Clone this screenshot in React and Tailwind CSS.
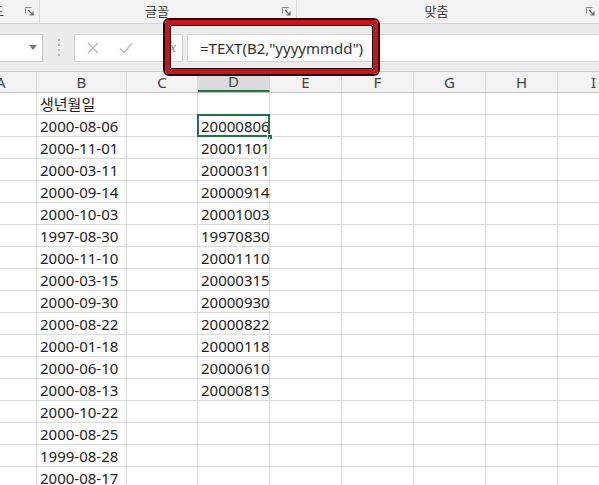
import React from 'react'

const dates = [
  '2000-08-06', '2000-11-01', '2000-03-11', '2000-09-14', '2000-10-03', '1997-08-30',
  '2000-11-10', '2000-03-15', '2000-09-30', '2000-08-22', '2000-01-18', '2000-06-10',
  '2000-08-13', '2000-10-22', '2000-08-25', '1999-08-28', '2000-08-17',
]
const results = [
  '20000806', '20001101', '20000311', '20000914', '20001003', '19970830',
  '20001110', '20000315', '20000930', '20000822', '20000118', '20000610', '20000813',
]

const cols = [
  { id: 'A', w: 'w-[37px]' },
  { id: 'B', w: 'w-[90px]' },
  { id: 'C', w: 'w-[71px]' },
  { id: 'D', w: 'w-[72px]' },
  { id: 'E', w: 'w-[72px]' },
  { id: 'F', w: 'w-[72px]' },
  { id: 'G', w: 'w-[72px]' },
  { id: 'H', w: 'w-[72px]' },
  { id: 'I', w: 'w-[72px]' },
]

function Launcher() {
  return (
    <svg width="9" height="9" viewBox="0 0 9 9" className="shrink-0">
      <path d="M0.5 0.5h6M0.5 0.5v6" stroke="#888" strokeWidth="1" fill="none" />
      <path d="M3 3l5 5M8 4.5v3.5h-3.5" stroke="#666" strokeWidth="1.2" fill="none" />
    </svg>
  )
}

function Ribbon() {
  return (
    <div className="flex h-[24px] bg-[#f3f3f3] border-b border-[#d6d6d6] text-[13px] text-[#444]">
      <div className="w-[40px] flex items-center justify-between overflow-hidden border-r border-[#dadada] pr-[5px]">
        <span className="-ml-[8px]">드</span>
        <Launcher />
      </div>
      <div className="w-[257px] flex items-center border-r border-[#dadada] pr-[5px]">
        <span className="flex-1 text-center pr-[8px]">글꼴</span>
        <Launcher />
      </div>
      <div className="flex-1 flex items-center pr-[4px]">
        <span className="flex-1 text-center pr-[10px]">맞춤</span>
        <Launcher />
      </div>
    </div>
  )
}

function FormulaBar() {
  return (
    <div className="flex items-center h-[48px] bg-[#ececec] border-b border-[#d0d0d0]">
      <div className="w-[43px] h-[28px] bg-white border border-l-0 border-[#c8c8c8] flex items-center justify-end pr-[5px]">
        <svg width="8" height="5" viewBox="0 0 8 5"><path d="M0 0h8L4 5z" fill="#777" /></svg>
      </div>
      <div className="w-[31px] flex flex-col items-center gap-[3px]">
        <span className="w-[2px] h-[2px] bg-[#b5b5b5]" />
        <span className="w-[2px] h-[2px] bg-[#b5b5b5]" />
        <span className="w-[2px] h-[2px] bg-[#b5b5b5]" />
        <span className="w-[2px] h-[2px] bg-[#b5b5b5]" />
      </div>
      <div className="w-[109px] h-[28px] bg-white border border-[#d4d4d4] flex items-center pl-[12px] pr-[6px] gap-[20px]">
        <svg width="12" height="12" viewBox="0 0 12 12"><path d="M1 1l10 10M11 1L1 11" stroke="#b8b8b8" strokeWidth="1.3" /></svg>
        <svg width="14" height="12" viewBox="0 0 14 12"><path d="M1 6.5l4 4L13 1.5" stroke="#b8b8b8" strokeWidth="1.4" fill="none" /></svg>
        <span className="ml-auto italic text-[14px] text-[#888] font-['Liberation_Serif',serif]">fx</span>
      </div>
      <div className="w-[4px]" />
      <div className="flex-1 h-[28px] bg-white border border-r-0 border-[#d4d4d4] flex items-center pl-[12px] pt-[1px] text-[15px] text-[#333]">
        =TEXT(B2,"yyyymmdd")
      </div>
    </div>
  )
}

function HeaderRow() {
  return (
    <div className="flex h-[21px] bg-[#f3f3f3] border-b border-[#c4c4c4] text-[15px] text-[#444]">
      {cols.map((c) => (
        <div
          key={c.id}
          className={`${c.w} shrink-0 flex items-center pt-[1px] border-r border-[#d8d8d8] ${c.id === 'A' ? 'justify-start' : 'justify-center'} ${c.id === 'D' ? 'bg-[#dcdcdc] border-b-2 border-b-[#217346]' : ''}`}
        >
          <span className={c.id === 'A' ? '-ml-[4px]' : ''}>{c.id}</span>
        </div>
      ))}
    </div>
  )
}

function Row({ b, d, active }) {
  return (
    <div className="flex h-[22px] border-b border-[#dadada] text-[15px] text-[#222]">
      {cols.map((c) => (
        <div key={c.id} className={`${c.w} shrink-0 relative flex items-center pt-[1px] border-r border-[#dadada] pl-[3px] whitespace-nowrap`}>
          {c.id === 'B' && b}
          {c.id === 'D' && d}
          {c.id === 'D' && active && (
            <>
              <div className="absolute -left-[1px] -top-[1px] -right-[1px] -bottom-[1px] border-2 border-[#217346]" />
              <div className="absolute -right-[4px] -bottom-[4px] w-[6px] h-[6px] bg-[#217346] border border-white" />
            </>
          )}
        </div>
      ))}
    </div>
  )
}

export default function App() {
  return (
    <div className="relative w-[599px] h-[485px] overflow-hidden bg-white font-['Noto_Sans','Noto_Sans_CJK_KR',sans-serif]">
      <Ribbon />
      <FormulaBar />
      <HeaderRow />
      <Row b="생년월일" d="" />
      {dates.map((dt, i) => (
        <Row key={i} b={dt} d={results[i] || ''} active={i === 0} />
      ))}

      {/* red highlight around the formula */}
      <div className="absolute left-[163px] top-[18px] w-[217px] h-[58px] rounded-[6px] border-[2px] border-[#2a0808]">
        <div className="w-full h-full rounded-[4px] border-[5px] border-[#c4161c]">
          <div className="w-full h-full rounded-[2px] border border-[#1a0505]" />
        </div>
      </div>
    </div>
  )
}
